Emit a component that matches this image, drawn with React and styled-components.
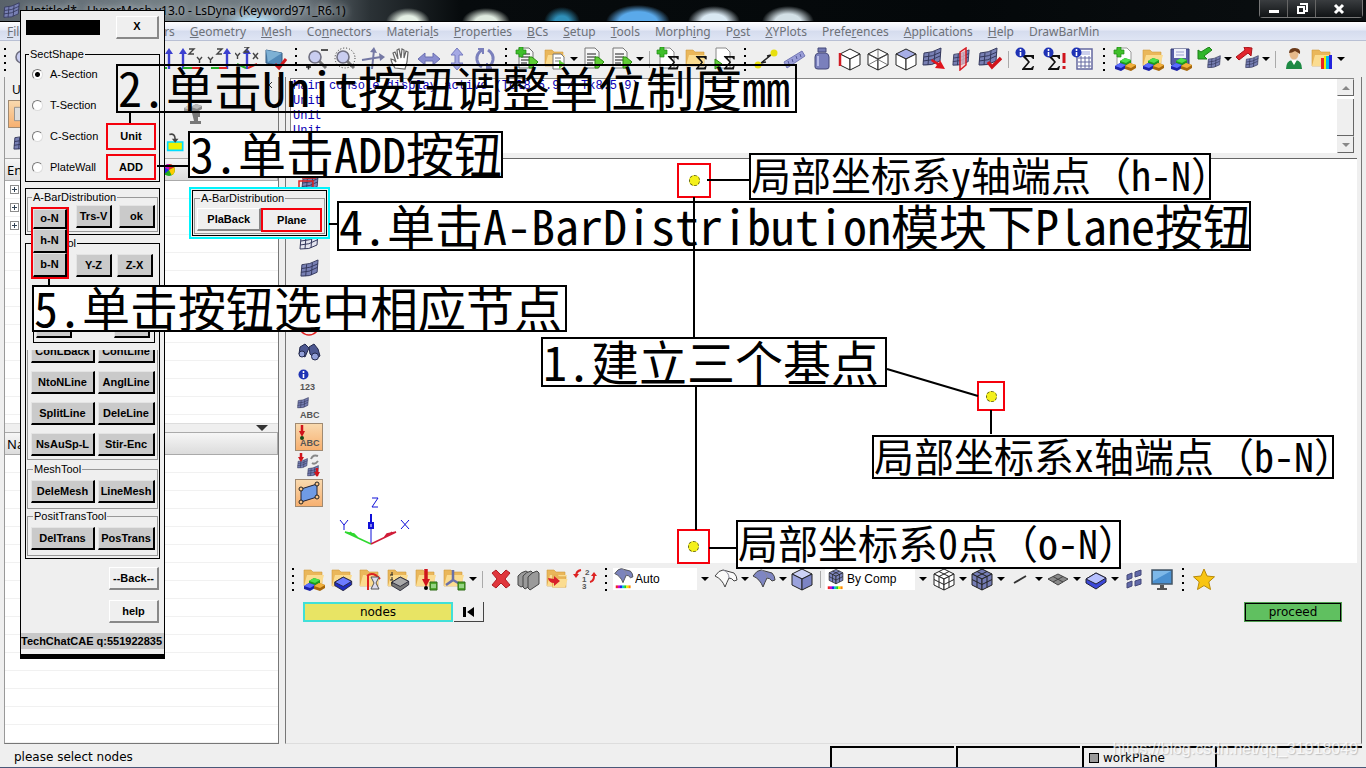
import React from "react";
import styled, { createGlobalStyle, css } from "styled-components";

const UI = `"Noto Sans", "Open Sans", sans-serif`;
const SANS = `"Liberation Sans", Arial, sans-serif`;
const PANEL = `"DejaVu Sans", Verdana, sans-serif`;
const FACE = "#efefef";

const Global = createGlobalStyle`
  *, *::before, *::after { box-sizing: border-box; }
  body { margin: 0; background: ${FACE}; font-family: ${SANS}; font-size: 12px; color: #000; }
  button, select, input { font: inherit; color: inherit; margin: 0; }
`;

/* ---------- window frame ---------- */
const Window = styled.div`
  position: relative;
  display: flex;
  flex-direction: column;
  min-height: 100vh;
  overflow: hidden;
  background: ${FACE};
`;
const TitleBar = styled.header`
  display: flex;
  justify-content: space-between;
  height: 22px;
  padding-left: 3px;
  border-bottom: 1px solid #000;
  background:
    radial-gradient(ellipse 22px 14px at 408px 22px, #e4efe4 45%, transparent),
    radial-gradient(ellipse 24px 14px at 486px 22px, #dfeadf 45%, transparent),
    radial-gradient(ellipse 18px 15px at 562px 22px, #2f8fb8 40%, transparent),
    radial-gradient(ellipse 32px 17px at 638px 22px, #5aa9ea 60%, transparent),
    radial-gradient(ellipse 26px 16px at 714px 22px, #d9e8f2 50%, transparent),
    radial-gradient(ellipse 26px 16px at 788px 22px, #d3e0e6 50%, transparent),
    radial-gradient(ellipse 34px 14px at 255px 22px, #b4dcf4 30%, transparent),
    linear-gradient(90deg, #59626a 0, #737d84 150px, #6d767d 300px, #2b3236 370px, #070b0d 460px, #04080a 70%, #0b0f11 100%);
`;
const TitleText = styled.h1`
  display: flex;
  align-items: center;
  gap: 5px;
  margin: 0;
  font: 400 12px/20px ${UI};
  color: #000;
  text-shadow: 0 0 6px #c9d0d4, 0 0 8px #aab3b8;
`;
const Controls = styled.div`
  display: flex;
  height: 18px;
  margin-right: 3px;
  border: 1px solid #777;
  border-top: 0;
  border-radius: 0 0 4px 4px;
`;
const ControlButton = styled.button`
  display: grid;
  place-items: center;
  width: ${(p) => (p.$wide ? 46 : 28)}px;
  padding: 0;
  border: 0;
  border-right: 1px solid #666;
  background: linear-gradient(#3a3d40, #101315);
  &:last-child { border-right: 0; }
`;
const MenuBar = styled.nav`
  display: flex;
  gap: 15px;
  height: 19px;
  padding-left: 7px;
  border-bottom: 1px solid #b9c0d4;
  background: linear-gradient(#fdfdff 0, #e6eaf6 45%, #d5dcee 50%, #dfe5f4 100%);
`;
const MenuLink = styled.a`
  font: 12px/19px ${UI};
  color: #6d7178;
  text-decoration: none;
  white-space: nowrap;
`;

/* ---------- toolbars ---------- */
const Toolbar = styled.div`
  display: flex;
  align-items: center;
  height: ${(p) => p.$h || 36}px;
`;
const Group = styled.div`
  display: flex;
  align-items: center;
  margin-left: ${(p) => p.$gap || 0}px;
`;
const Grip = styled.span`
  flex: none;
  width: ${(p) => p.$w || 14}px;
  height: 23px;
  background: repeating-linear-gradient(#000 0 2px, transparent 2px 7px) center / 2px 100% no-repeat;
`;
const ToolButton = styled.button`
  display: grid;
  place-items: center;
  flex: none;
  width: 28px;
  height: 28px;
  padding: 0;
  border: 0;
  background: none;
  ${(p) => p.$active && css`
    border: 1px solid #a08a72;
    background: linear-gradient(#f9d9ae, #f7b070);
  `}
`;
const Caret = styled.span`
  flex: none;
  width: 10px;
  display: grid;
  place-items: center;
  &::after {
    content: "";
    border: 4px solid transparent;
    border-top-color: #000;
    border-bottom: 0;
  }
`;
const Rule = styled.span`
  flex: none;
  width: 9px;
  height: 17px;
  background: linear-gradient(#aaa, #aaa) center / 1px 100% no-repeat;
`;
const Combo = styled.label`
  display: flex;
  align-items: center;
  flex: none;
  width: ${(p) => p.$w}px;
  height: 22px;
  background: #fff;
`;
const ComboSelect = styled.select`
  appearance: none;
  flex: 1;
  min-width: 0;
  height: 22px;
  padding: 0;
  border: 0;
  background: transparent;
  font-size: 12px;
`;
const ComboArrow = styled.span`
  display: grid;
  place-items: center;
  width: 15px;
  height: 22px;
  background: ${FACE};
`;

/* ---------- workspace ---------- */
const Workspace = styled.div`
  display: flex;
  flex: 1;
`;
const Browser = styled.aside`
  display: flex;
  flex-direction: column;
  flex: 0 0 275px;
  margin-left: 4px;
  border-left: 1px solid #999;
  border-right: 1px solid #777;
  border-bottom: 1px solid #777;
`;
const BrowserTools = styled.div`
  display: flex;
  flex-direction: column;
  height: 81px;
  padding: 3px 3px 0;
`;
const BrowserTab = styled.div`
  display: flex;
  justify-content: space-between;
  padding-left: 4px;
  font: 12px/20px ${UI};
`;
const CloseTab = styled.button`
  width: 12px;
  height: 10px;
  padding: 0;
  border: 0;
  background: none;
  line-height: 0;
`;
const BrowserRow = styled.div`
  display: flex;
  align-items: center;
  gap: 126px;
  height: 28px;
`;
const ListHead = styled.div`
  display: flex;
  align-items: center;
  justify-content: space-between;
  height: 23px;
  padding: 0 100px 0 2px;
  border: 1px solid #aaa;
  border-left: 0;
  background: linear-gradient(#f6f6f6, #dcdcdc);
  font: 13px/20px ${UI};
`;
const List = styled.div`
  flex: ${(p) => (p.$grow ? 1 : "none")};
  height: ${(p) => (p.$grow ? "auto" : "242px")};
  background: repeating-linear-gradient(#fff 0 17px, #f1f1f1 17px 18px);
`;
const Expander = styled.button`
  display: block;
  width: 9px;
  height: 9px;
  margin: 4px 0 9px 5px;
  padding: 0;
  border: 1px solid #8c8c8c;
  background:
    linear-gradient(#345, #345) center / 5px 1px no-repeat,
    linear-gradient(#345, #345) center / 1px 5px no-repeat, #fff;
`;
const Splitter = styled.div`
  display: flex;
  justify-content: flex-end;
  align-items: center;
  height: 9px;
  padding-right: 10px;
  border-top: 1px solid #ddd;
  &::after {
    content: "";
    border: 6px solid transparent;
    border-top-color: #333;
    border-bottom: 0;
  }
`;
const Main = styled.main`
  display: flex;
  flex-direction: column;
  flex: 1;
  min-width: 0;
  margin: 0 4px 0 6px;
  border-left: 1px solid #777;
  border-right: 1px solid #777;
  border-bottom: 1px solid #ddd;
`;
const Console = styled.div`
  display: flex;
  height: 80px;
  margin: 1px 7px 0 4px;
  padding-bottom: 5px;
  border-top: 1px solid #888;
`;
const ConsoleText = styled.pre`
  flex: 1;
  margin: 0;
  padding: 0 2px;
  overflow: hidden;
  background: #fff;
  border-left: 1px solid #888;
  color: #0a00b4;
  font: 12px/15px "Liberation Mono", monospace;
`;
const ScrollRail = styled.div`
  display: flex;
  flex-direction: column;
  width: 17px;
  background: #fff;
`;
const ScrollButton = styled.button`
  display: grid;
  place-items: center;
  height: 17px;
  padding: 0;
  border: 1px solid #eee;
  border-right-color: #666;
  border-bottom-color: #666;
  background: ${FACE};
`;
const ScrollThumb = styled.div`
  flex: 1;
  margin-top: 3px;
  border-right: 1px solid #666;
  border-bottom: 1px solid #666;
  background: ${FACE};
`;
const View = styled.div`
  display: flex;
  flex: 1;
  max-height: 405px;
  margin-right: 4px;
  border-top: 1px solid #666;
`;
const SideTools = styled.div`
  flex: none;
  width: 44px;
  padding: 12px 0 0 9px;
`;
const Canvas = styled.div`
  display: flex;
  align-items: flex-end;
  flex: 1;
  background: #fff;
  padding: 0 0 17px 6px;
`;
const CommandPanel = styled.section`
  display: flex;
  justify-content: space-between;
  height: 148px;
  padding: 7px 19px 0 17px;
  font: 12px/14px ${PANEL};
`;
const EntityKeys = styled.div`
  display: flex;
  align-items: flex-start;
  gap: 1px;
`;
const EntityButton = styled.button`
  width: 150px;
  height: 20px;
  padding: 0;
  border: 2px solid #40e0d8;
  background: #e8e464;
`;
const ResetButton = styled.button`
  display: grid;
  place-items: center;
  width: 30px;
  height: 20px;
  padding: 0;
  border: 0;
  border-right: 1px solid #444;
  border-bottom: 1px solid #444;
  background: ${FACE};
`;
const ProceedButton = styled.button`
  width: 98px;
  height: 20px;
  padding: 0;
  border: 2px solid #000;
  outline: 1px solid #4f9c4f;
  outline-offset: -1px;
  background: #60c060;
`;
const StatusBar = styled.footer`
  display: flex;
  align-items: stretch;
  height: 24px;
  padding-right: 2px;
  border-bottom: 1px solid #4a5878;
  font: 12px/22px ${PANEL};
`;
const StatusText = styled.p`
  flex: 1;
  margin: 0;
  padding: 2px 0 0 14px;
`;
const StatusCell = styled.div`
  display: flex;
  align-items: center;
  gap: 4px;
  width: ${(p) => p.$w}px;
  margin: 2px 2px 0 0;
  padding-left: 5px;
  border-top: 2px solid #000;
  border-left: 2px solid #000;
`;
const Swatch = styled.span`
  width: 10px;
  height: 10px;
  border: 1px solid #000;
  background: #999;
`;
const Watermark = styled.span`
  position: absolute;
  right: 8px;
  bottom: 9px;
  font: 16px/20px ${SANS};
  color: rgba(255, 255, 255, 0.8);
  text-shadow: 1px 1px 1px rgba(120, 120, 120, 0.4);
`;

/* ---------- floating macro window ---------- */
const MacroWindow = styled.section`
  position: absolute;
  left: 20px;
  top: 10px;
  width: 145px;
  padding: 0 4px;
  border: 1px solid #000;
  border-width: 1px 1px 5px 1px;
  background: ${FACE};
  font: 11px/13px ${SANS};
`;
const MacroHead = styled.div`
  display: flex;
  justify-content: space-between;
  align-items: center;
  height: 37px;
  padding: 0 1px 5px;
`;
const Masked = styled.span`
  width: 74px;
  height: 15px;
  background: #000;
`;
const Key = styled.button`
  width: ${(p) => p.$w || 56}px;
  height: ${(p) => p.$h || 23}px;
  padding: 0;
  overflow: hidden;
  border: 1px solid ${(p) => (p.$light ? "#fff" : "#e4e4e4")};
  border-right: 2px solid ${(p) => (p.$light ? "#888" : "#000")};
  border-bottom: 2px solid ${(p) => (p.$light ? "#888" : "#000")};
  background: ${(p) => (p.$light ? FACE : "#cacaca")};
  font: 700 11px/13px ${SANS};
  white-space: nowrap;
  ${(p) => p.$marked && css`border: 2px solid #f5000c;`}
`;
const Box = styled.fieldset`
  min-width: 0;
  margin: ${(p) => p.$top || 0}px 0 0;
  padding: ${(p) => p.$pad || "4px 2px 5px 3px"};
  border: 1px solid ${(p) => (p.$dark ? "#000" : "#999")};
`;
const Legend = styled.legend`
  margin-left: ${(p) => p.$indent || 2}px;
  padding: 0 1px;
  line-height: 13px;
`;
const SectionBody = styled.div`
  display: flex;
  justify-content: space-between;
`;
const Radios = styled.div`
  display: flex;
  flex-direction: column;
  gap: 18px;
  padding-bottom: 6px;
`;
const RadioLabel = styled.label`
  display: flex;
  align-items: center;
  gap: 7px;
  height: 13px;
  white-space: nowrap;
`;
const Radio = styled.input`
  appearance: none;
  width: 11px;
  height: 11px;
  border: 1px solid #777;
  border-right-color: #ddd;
  border-bottom-color: #ddd;
  border-radius: 50%;
  background: #fff;
  &:checked { background: radial-gradient(circle, #000 0 2px, #fff 3px); }
`;
const SideKeys = styled.div`
  display: flex;
  flex-direction: column;
  justify-content: flex-end;
  gap: 4px;
`;
const Frame = styled.div`
  margin-top: ${(p) => p.$top || 0}px;
  padding: ${(p) => (p.$tight ? 1 : 2)}px 1px;
  border: 1px solid #000;
`;
const KeyRow = styled.div`
  display: flex;
  justify-content: ${(p) => p.$justify || "space-between"};
  gap: ${(p) => p.$gap || 0}px;
  margin-bottom: ${(p) => p.$after || 0}px;
`;
const Tray = styled.div`
  display: flex;
  justify-content: space-between;
  margin: 35px 3px 7px 6px;
  padding: 3px 4px 4px 2px;
  border: 1px solid #000;
  border-top: 0;
`;
const CutRow = styled.div`
  display: flex;
  justify-content: space-between;
  align-items: flex-end;
  height: 13px;
  margin-bottom: 8px;
  overflow: hidden;
`;
const LineKeys = styled.div`
  margin: 0 0 3px;
  padding: 0 2px 3px 3px;
  border: 1px solid #999;
  border-top: 0;
`;
const Foot = styled.div`
  display: flex;
  flex-direction: column;
  align-items: flex-end;
  gap: 10px;
  padding: 8px 1px 10px 0;
`;
const Credit = styled.p`
  margin: 0 -4px 5px;
  background: #c8c8c8;
  font: 700 11px/16px ${SANS};
  white-space: nowrap;
`;

/* ---------- callouts pinned over the window ---------- */
const pin = css`
  position: absolute;
  left: ${(p) => p.$x}px;
  top: ${(p) => p.$y}px;
`;
const Note = styled.p`
  ${pin}
  width: ${(p) => p.$w}px;
  height: ${(p) => p.$h}px;
  margin: 0;
  border: 2px solid #000;
  background: ${(p) => (p.$clear ? "transparent" : "#fff")};
  font-family: "Noto Sans Mono CJK SC", "Noto Sans CJK SC", sans-serif;
  font-size: ${(p) => (p.$small ? 40 : 48)}px;
  line-height: ${(p) => p.$h - 8}px;
  white-space: nowrap;
`;
const Target = styled.span`
  ${pin}
  display: grid;
  place-items: center;
  width: ${(p) => p.$w}px;
  height: ${(p) => p.$h}px;
  border: 2px solid #f5000c;
  background: #fff;
  &::after {
    content: "";
    width: 11px;
    height: 11px;
    border: 1px dashed #6a6a10;
    border-radius: 50%;
    background: #f4f01c;
  }
`;
const NodeKeys = styled.div`
  ${pin}
  display: flex;
  flex-direction: column;
  width: 38px;
  border: 2px solid #f5000c;
  background: #cacaca;
`;
const PlaneBox = styled.div`
  ${pin}
  width: 141px;
  padding: 1px;
  border: 2px solid #00f4fc;
  background: ${FACE};
  font: 11px/13px ${SANS};
`;
const Connectors = styled.svg`
  position: absolute;
  left: 0;
  top: 0;
  pointer-events: none;
`;

/* ---------- icon pieces ---------- */
const Folder = () => (
  <g>
    <path d="M2 3h7l2 2h9v14H2z" fill="#eab75a" stroke="#d09a3c" strokeWidth=".6" />
    <path d="M2 19 5 8h17l-3 11z" fill="#fbdc90" />
  </g>
);
const Block = ({ x, y, c, d }) => (
  <g transform={`translate(${x} ${y})`}>
    <path d="M0 3 5 0l6 2v3L6 8 0 6z" fill={d} />
    <path d="M0 3 5 0l6 2-5 3z" fill={c} />
  </g>
);
const Comps = () => (
  <g>
    <Block x={7} y={11} c="#4be04b" d="#1e9a1e" />
    <Block x={2} y={16} c="#5b6cff" d="#1c22a8" />
    <Block x={12} y={16} c="#f2b13c" d="#a8680c" />
  </g>
);
const Mesh = ({ x = 0, y = 0, s = 1, c = "#7880b4" }) => (
  <g transform={`translate(${x} ${y}) scale(${s})`}>
    <path d="M2 6Q10 6 19 1l-1 13Q10 19 1 18z" fill={c} stroke="#34385c" />
    <path d="M7 5.500 6 18M13 4l-1 13M2 10q8 0 17-5M1 14q9 0 17-5" fill="none" stroke="#34385c" />
  </g>
);
const Doc = () => (
  <g>
    <path d="M4 1h10l4 4v16H4z" fill="#f7f7f7" stroke="#777" />
    <path d="M6 7h9M6 10h9M6 13h9M6 16h6" stroke="#666" strokeWidth="1.500" />
  </g>
);
const Plus = () => <path d="M4 0h4v3h3v4H8v3H4V7H1V3h3z" fill="#3fbf2a" stroke="#1d8a12" strokeWidth=".7" />;
const Sigma = ({ x = 6, y = 6, s = 1 }) => (
  <path transform={`translate(${x} ${y}) scale(${s})`} d="M1 1h12v4h-1l-2-2H5l4 5-5 6h6l2-2h1l-1 4H1v-1l6-7-6-6z" fill="#111" />
);
const Info = () => (
  <g>
    <circle cx="5.500" cy="5.500" r="5" fill="#1f33b5" />
    <path d="M5.500 2v2M5.500 5v4" stroke="#fff" strokeWidth="1.600" />
  </g>
);
const GreenOut = () => <path d="M14 10l3 0 6 5-6 6h-3z" fill="#5fce35" stroke="#2c8a12" />;
const Lens = () => (
  <g>
    <path d="M14 14l7 7" stroke="#777" strokeWidth="3" />
    <circle cx="10" cy="10" r="6" fill="#c9cdf0" stroke="#6f6f80" strokeWidth="1.600" />
  </g>
);
const Axis = ({ c, d }) => <path d={d} stroke={c} strokeWidth="2" fill="none" />;
const CubeWire = ({ top = "#fff", left = "#fff", right = "#fff" }) => (
  <g stroke="#222" strokeLinejoin="round">
    <path d="M12 2l10 5-10 5L2 7z" fill={top} />
    <path d="M2 7l10 5v11L2 18z" fill={left} />
    <path d="M22 7l-10 5v11l10-5z" fill={right} />
  </g>
);
const CubeGrid = ({ c, s = "#222" }) => (
  <g>
    <CubeWire top={c} left={c} right={c} />
    <path d="M7 4.500l10 5v11M17 4.500l-10 5v11M2 12.500l10 5 10-5" fill="none" stroke={s} />
  </g>
);
const Curve = ({ c }) => (
  <g stroke="#444" strokeLinejoin="round">
    <path d="M1 9Q5 3 9 3L20 6q3 3 3 7l-3 1q-2-3-5-3-2 4-4 9Q8 12 1 9z" fill={c} />
    <path d="M9 3q6 2 6 8" fill="none" stroke="#8a8a9a" />
  </g>
);
const Slab = ({ t, s }) => (
  <g stroke="#223">
    <path d="M2 12l10-6 10 5v4l-10 7-10-6z" fill={s} />
    <path d="M2 12l10-6 10 5-10 6z" fill={t} />
  </g>
);
const Rainbow = ({ y = 19 }) => (
  <g>
    {["#e22", "#c0c", "#22e", "#0cc", "#2c2", "#ee0", "#f80"].map((c, i) => (
      <rect key={c} x={3 + i * 2.3} y={y} width="2.400" height="3" fill={c} />
    ))}
  </g>
);
const ZUp = ({ x = 6 }) => (
  <g>
    <path d={`M${x} 22V5`} stroke="#3b40d0" strokeWidth="2.400" />
    <path d={`M${x - 4} 7l4-6 4 6z`} fill="#3b40d0" />
  </g>
);
const Z = ({ x, y }) => <path d={`M${x} ${y}h5l-5 5h5`} fill="none" stroke="#444" strokeWidth="1.400" />;
const Y = ({ x, y }) => <path d={`M${x} ${y}l2.500 3 2.500-3M${x + 2.5} ${y + 3}v3`} fill="none" stroke="#444" strokeWidth="1.400" />;
const X = ({ x, y }) => <path d={`M${x} ${y}l5 6M${x + 5} ${y}l-5 6`} fill="none" stroke="#444" strokeWidth="1.400" />;
const Abc = ({ t }) => (
  <text x="3" y="21" fontFamily="Liberation Sans, sans-serif" fontWeight="700" fontSize="9" fill="#555">{t}</text>
);

const ART = {
  lens: <Lens />,
  axA: <g><Z x={6} y={2} /><ZUp x={18} /><Axis c="#2a2" d="M2 21h14" /></g>,
  axB: <g><ZUp x={4} /><Z x={10} y={2} /><Y x={18} y={10} /><Axis c="#2a2" d="M4 21h10" /><Axis c="#d22" d="M13 21h8" /></g>,
  axC: <g><ZUp x={20} /><Z x={10} y={2} /><Y x={1} y={10} /><Axis c="#2a2" d="M4 21h8" /><Axis c="#d22" d="M12 21h8" /></g>,
  axD: <g><ZUp x={12} /><Y x={0} y={6} /><Z x={9} y={0} /><X x={18} y={6} /><Axis c="#2a2" d="M11 21l-9-4" /><Axis c="#d22" d="M13 21l9-4" /></g>,
  monCheck: <g><path d="M3 3l16 3v13L3 16z" fill="#5289b8" stroke="#335a80" /><path d="M3 3l16 3-14 9z" fill="#7db0d4" /><path d="M12 17l4 4 7-9" fill="none" stroke="#d0191e" strokeWidth="3" /></g>,
  zoomOut: <g><Lens /><path d="M16 3h7M1 20h5M3.500 17.500v5" stroke="#222" strokeWidth="1.500" /></g>,
  zoomDot: <g><circle cx="12" cy="11" r="10" fill="none" stroke="#222" strokeDasharray="1 2" /><Lens /></g>,
  cross: <g><path d="M1 13l19-3M13 3l-2 19" stroke="#7478a4" strokeWidth="2" /><path d="M18 6l6 4-5 4zM9 5l4-5 3 6z" fill="#7478a4" /></g>,
  hand: <path d="M6 21Q2 15 2 12l3 1 2 2-3-9 2-1 3 7-1-9 2-1 2 9 1-9 2 1 0 8 2-7 2 1-1 10-2 7z" fill="#fff" stroke="#666" strokeWidth="1.200" />,
  hArrow: <path d="M1 12l7-6v4h8V6l7 6-7 6v-4H8v4z" fill="#8a8ed0" stroke="#6a6eb0" />,
  vArrow: <path d="M12 1l6 7h-4v8h4l-6 7-6-7h4V8H6z" fill="#a5a9e4" stroke="#777bc0" />,
  rotate: <g fill="none" stroke="#7b80bc" strokeWidth="3"><path d="M9 3Q3 7 4 13q1 5 5 7M15 3q6 4 5 10-1 5-5 7" /><path d="M5 2h5v5M19 21h-5v-5" strokeWidth="2" /></g>,
  docPlus: <g><Doc /><Plus /><GreenOut /></g>,
  folderDoc: <g><Folder /><path d="M10 7h8l3 3v12H10z" fill="#fff" stroke="#777" /><path d="M12 11h6M12 14h6" stroke="#777" /><path d="M16 13l6 4-6 5z" fill="#5fce35" /></g>,
  docOut: <g><Doc /><GreenOut /></g>,
  sigPlus: <g><path d="M4 1h10l4 4v16H4z" fill="#fff" stroke="#888" /><Plus /><Sigma x={11} y={8} s={0.9} /></g>,
  sigFolder: <g><Folder /><Sigma x={11} y={8} s={0.9} /></g>,
  sigOut: <g><path d="M4 1h10l4 4v16H4z" fill="#fff" stroke="#888" /><path d="M3 12l7 5-7 5z" fill="#5fce35" stroke="#2c8a12" /><Sigma x={11} y={8} s={0.9} /></g>,
  measure: <g><path d="M7 16l10-8M7 16l5-1M17 8l-4 1" stroke="#222" strokeWidth="1.500" /><circle cx="4" cy="18" r="3.500" fill="#e8e010" /><circle cx="20" cy="6" r="3.500" fill="#e8e010" /></g>,
  ruler: <g><path d="M2 15L20 4l3 5L5 21z" fill="#9a9ed8" stroke="#7478b4" /><path d="M6 14l1 3M10 12l1 3M14 9l1 3M18 7l1 3" stroke="#555a98" /></g>,
  weight: <g><path d="M8 1h8v4H8z" fill="#767cb6" stroke="#444878" /><path d="M8 6q-3 1-3 4v10q0 2 3 2h8q3 0 3-2V10q0-3-3-4z" fill="#7a80bc" stroke="#444878" /><path d="M8 9v10" stroke="#b9bde8" strokeWidth="2" /></g>,
  wireRed: <g><CubeWire /><path d="M2 6v13" stroke="#d01c24" strokeWidth="2.500" /></g>,
  wire: <g><CubeWire /><path d="M12 2v11M2 18l20-11M22 18L2 7" stroke="#555" strokeWidth=".8" /></g>,
  wireTop: <CubeWire top="#a7aee6" />,
  meshArrow: <g><Mesh /><path d="M10 12l7 4 1-3 5 9-10-1 2-3-6-4z" fill="#e0141c" /></g>,
  meshCut: <g><Mesh x={2} y={2} s={0.9} /><path d="M10 5l6-4v17l-6 5z" fill="#f6c5c8" fillOpacity=".7" stroke="#d81c24" strokeWidth="1.500" /></g>,
  meshCheck: <g><Mesh /><path d="M10 15l4 5 9-9" fill="none" stroke="#d0141c" strokeWidth="3.500" /></g>,
  infoSig: <g><Sigma x={6} y={7} /><Info /></g>,
  infoSigBang: <g><Sigma x={4} y={7} /><Info /><path d="M21 6v10M21 19v3" stroke="#d0141c" strokeWidth="3" /></g>,
  infoCalc: <g><path d="M6 2h15v20H6z" fill="#fff" stroke="#6468a0" strokeWidth="1.500" /><path d="M8 4h11v4H8z" fill="#cdd0ec" /><path d="M7 11h13M7 15h13M7 19h13M10 9v12M14 9v12M18 9v12" stroke="#6468a0" /><Info /></g>,
  compNew: <g><path d="M4 1h10l4 4v16H4z" fill="#fff" stroke="#999" /><Plus /><Comps /></g>,
  compFolder: <g><Folder /><Comps /></g>,
  compSave: <g><path d="M2 2h18v17H4l-2-2z" fill="#555ca6" stroke="#333a70" /><path d="M5 2h12v9H5z" fill="#eef0fa" /><path d="M7 5h8M7 8h8" stroke="#9aa0d0" /><Comps /></g>,
  meshIn: <g><Mesh x={10} y={8} s={0.7} /><path d="M1 12V3l3 2 8-5 3 3-8 6 3 3z" fill="#30b52a" stroke="#1c8018" /></g>,
  meshOut: <g><Mesh x={10} y={8} s={0.7} /><path d="M9 0l8 1-1 8-3-3-9 7-3-3 9-7z" fill="#e2242c" stroke="#a8141a" /></g>,
  user: <g><path d="M4 22q0-8 6-9h4q6 1 6 9z" fill="#1d8a44" /><path d="M9 13l3 5 3-5z" fill="#fff" /><ellipse cx="12" cy="7" rx="4.500" ry="5.500" fill="#e7b98a" /><path d="M7 6q0-5 6-5t5 6q-3-2-5-3-3 2-6 2z" fill="#6b3a1a" /></g>,
  folderChart: <g><Folder /><path d="M11 11h3v11h-3z" fill="#e22" /><path d="M14 9h2v13h-2z" fill="#ee0" /><path d="M16 9h3v13h-3z" fill="#0be" /><path d="M19 8h3v14h-3z" fill="#22d" /></g>,
  mesh: <Mesh x={3} y={2} s={0.95} />,
  meshFrame: <g><Mesh x={4} y={1} s={0.9} /><path d="M2 8h14v12H2zM5 5h14" fill="none" stroke="#d22" strokeWidth="1.500" /></g>,
  meshLite: <Mesh x={2} y={2} c="#e3e4ef" />,
  noCircle: <g><Mesh x={4} y={3} s={0.8} /><circle cx="12" cy="12" r="10" fill="none" stroke="#e02020" strokeWidth="1.500" /></g>,
  binoc: <g fill="#4c5790" stroke="#22284c"><path d="M3 6l5-3 4 4-4 9-6-3z" /><path d="M12 6l5-3 4 5 2 7-5 3-5-5z" /><circle cx="5" cy="13" r="3" fill="#93a0d8" /><circle cx="18" cy="15.500" r="3.500" fill="#93a0d8" /></g>,
  info123: <g><g transform="translate(1 0)"><Info /></g><Abc t="123" /></g>,
  meshAbc: <g><Mesh x={0} y={0} s={0.6} /><Abc t="ABC" /></g>,
  loadAbc: <g><path d="M5 0v9" stroke="#d0141c" strokeWidth="2.500" /><path d="M2 6h6l-3 6z" fill="#d0141c" /><circle cx="5" cy="13" r="2" fill="#174a17" /><Abc t="ABC" /></g>,
  meshSwap: <g><Mesh x={0} y={5} s={0.55} /><Mesh x={10} y={12} s={0.6} /><path d="M4 0v7M20 15v8" stroke="#d0141c" strokeWidth="2.500" /><path d="M1 4h6L4 9zM17 19h6l-3 5z" fill="#d0141c" /><path d="M14 6q2-5 7-3M21 8q-3 4-6 2" fill="none" stroke="#888" strokeWidth="2" /></g>,
  quad: <g><path d="M4 8l16-5v13L4 21z" fill="#6f9be4" stroke="#223" /><g fill="#f7c48a" stroke="#222"><circle cx="4" cy="8" r="2" /><circle cx="20" cy="3" r="2" /><circle cx="20" cy="16" r="2" /><circle cx="4" cy="21" r="2" /></g></g>,
  slabFolder: <g><Folder /><g transform="translate(3 5) scale(.85)"><Slab t="#6c7cff" s="#1e2cc0" /></g></g>,
  timeFolder: <g><Folder /><path d="M9 9q6-5 13 3M10 9v14" fill="none" stroke="#d22" strokeWidth="2" /><path d="M13 10h8l-3 6 3 6h-8l3-6z" fill="#dde" stroke="#555" /></g>,
  propFolder: <g><Folder /><g transform="translate(4 5) scale(.85)"><Slab t="#aaa" s="#777" /></g><path d="M6 5v12M4 8h4M4 13h4" stroke="#222" strokeDasharray="3 2" /></g>,
  loadFolder: <g><Folder /><path d="M12 2v12" stroke="#d0141c" strokeWidth="3.500" /><path d="M8 12h8l-4 8z" fill="#d0141c" /><circle cx="12" cy="21" r="2" /><path d="M16 15h7v8h-7z" fill="#4fa82c" stroke="#2c6a14" /><path d="M17 18h5M17 20h5" stroke="#dfd" /></g>,
  sysFolder: <g><Folder /><path d="M11 3v10l-7 5M11 13l7 4" fill="none" stroke="#6a70a8" strokeWidth="2.500" /><path d="M16 15h7v8h-7z" fill="#4fa82c" stroke="#2c6a14" /><path d="M17 18h5M17 20h5" stroke="#dfd" /></g>,
  del: <path d="M3 6l4-3 5 5 5-5 4 3-5 6 5 6-4 3-5-5-5 5-4-3 5-6z" fill="#e0363c" stroke="#b01c22" strokeLinejoin="round" />,
  stack: <g fill="#9a9a9a" stroke="#444"><path d="M1 9q3-4 8-5l3 2v11l-8 3-3-2z" /><path d="M6 9q3-4 8-5l2 2v11l-8 5-2-2z" /><path d="M11 10q4-5 9-6l2 2v11l-9 6-2-2z" /></g>,
  moveFolder: <g><Folder /><g transform="translate(6 6) scale(.75)"><Folder /></g><path d="M3 11l6 1V9l6 5-6 5v-3q-5 0-6-5z" fill="#d8202a" /></g>,
  renum: <g><path d="M3 9q0-5 5-6M21 9q0 5-4 6" fill="none" stroke="#d22" strokeWidth="2" /><path d="M0 7h6l-3 4zM18 9h6l-3-4z" fill="#d22" /><g fontFamily="Liberation Sans, sans-serif" fontWeight="700" fontSize="8" fill="#555"><text x="12" y="8">2</text><text x="9" y="15">1</text><text x="9" y="22">3</text></g></g>,
  autoCombo: <g><g transform="translate(1 -2) scale(.9)"><Curve c="#7c84bc" /></g><Rainbow /></g>,
  curveLite: <Curve c="#fafafa" />,
  curve: <Curve c="#7f86c2" />,
  cube: <CubeWire top="#cdd2f6" left="#9aa2dc" right="#7c84c4" />,
  compCombo: <g><g transform="translate(3 0) scale(.75)"><CubeGrid c="#7c84bc" /></g><Rainbow y={20} /></g>,
  gridLite: <CubeGrid c="#fff" />,
  grid: <CubeGrid c="#747cb4" />,
  line: <path d="M6 16l12-7" stroke="#333" strokeWidth="1.800" />,
  plane: <g><path d="M2 12l10-5 10 5-10 6z" fill="#888" stroke="#444" /><path d="M7 9.500l10 5.500M17 9.500L7 15" stroke="#444" /></g>,
  slab: <Slab t="#b6c0ff" s="#3c48d8" />,
  quads: <g fill="#6068a8" stroke="#444878"><path d="M5 8l5-2v5l-5 2zM13 5l6-2v5l-6 2zM5 16l5-2v5l-5 2zM13 14l6-2v5l-6 2z" /></g>,
  screen: <g><path d="M2 3h20v14H2z" fill="#4a90d0" stroke="#456" strokeWidth="1.500" /><path d="M3 4h18L3 14z" fill="#7db8e8" /><path d="M10 18h4v3h3v2H7v-2h3z" fill="#555" /></g>,
  star: <path d="M12 2l3 7 7.500.8-5.700 5.100 1.700 7.600-6.500-3.900-6.500 3.900 1.700-7.600L1.500 9.800 9 9z" fill="#f9c512" stroke="#b98a08" />,
  blocksGrey: <g><Block x={2} y={3} c="#ccc" d="#999" /><Block x={9} y={2} c="#bbb" d="#888" /><path d="M10 11h8v4h-2v4h3v3H8v-3h4z" fill="#777" /></g>,
  arrowBox: <g><path d="M2 12h18v10H2z" fill="#eef000" stroke="#0df" strokeWidth="2" /><path d="M4 3q7-2 7 6" fill="none" stroke="#444" strokeWidth="2" /><path d="M7 8h8l-4 5z" fill="#444" /></g>,
  wheel: <g><circle cx="12" cy="12" r="9" fill="#2a2" /><path d="M12 12V3a9 9 0 0 1 8 5z" fill="#e22" /><path d="M12 12l8-4a9 9 0 0 1-4 12z" fill="#fc0" /><path d="M12 12L4 8a9 9 0 0 1 8-5z" fill="#c0c" /><path d="M12 12L4 8a9 9 0 0 0 1 10z" fill="#22e" /></g>,
  page: <path d="M3 4h18v16H3z" fill="#ddd" stroke="#888" />,
};
const Icon = ({ name, size = 24 }) => (
  <svg width={size} height={size} viewBox="0 0 24 24" aria-hidden="true">{ART[name]}</svg>
);

/* "|" is a rule, "v" a drop-down caret, ":" a grip */
const Tools = ({ items }) =>
  items.split(" ").map((n, i) => {
    if (n === "|") return <Rule key={i} />;
    if (n === "v") return <Caret key={i} />;
    if (n === ":") return <Grip key={i} />;
    return <ToolButton key={i} aria-label={n}><Icon name={n} /></ToolButton>;
  });

const MENUS = ["_File", "_Edit", "_View", "_Collectors", "_Geometry", "_Mesh", "Co_nnectors", "Materia_ls", "_Properties", "_BCs", "_Setup", "_Tools", "Morph_ing", "P_ost", "_XYPlots", "Prefe_rences", "_Applications", "_Help", "DrawBarMin"];
const MenuItem = ({ text }) => {
  const at = text.indexOf("_");
  if (at < 0) return <MenuLink href="#">{text}</MenuLink>;
  return <MenuLink href="#">{text.slice(0, at)}<u>{text[at + 1]}</u>{text.slice(at + 2)}</MenuLink>;
};

const SECTIONS = ["A-Section", "T-Section", "C-Section", "PlateWall"];
const SIDE = ["meshFrame", "mesh", "meshLite", "mesh", "mesh", "noCircle", "binoc", "info123", "meshAbc", "loadAbc", "meshSwap", "quad"];
const LINKS = [
  [130, 113, 130, 123], [157, 166, 188, 166], [329, 224, 337, 224], [49, 279, 49, 286],
  [694, 197, 694, 337], [696, 387, 696, 530], [707, 180, 749, 180], [887, 369, 978, 396],
  [991, 410, 991, 434], [709, 548, 736, 548],
];

const Macro = () => (
  <MacroWindow>
    <MacroHead><Masked /><Key $light $w={43}>X</Key></MacroHead>
    <Box $dark $pad="7px 3px 1px 6px">
      <Legend $indent={-3}>SectShape</Legend>
      <SectionBody>
        <Radios>
          {SECTIONS.map((s, i) => (
            <RadioLabel key={s}><Radio type="radio" name="section" defaultChecked={i === 0} />{s}</RadioLabel>
          ))}
        </Radios>
        <SideKeys>
          <Key $light $marked $w={50} $h={27}>Unit</Key>
          <Key $light $marked $w={50} $h={26}>ADD</Key>
        </SideKeys>
      </SectionBody>
    </Box>
    <Frame $top={6}>
      <Box $pad="1px 2px 3px">
        <Legend>A-BarDistribution</Legend>
        <KeyRow $justify="flex-end" $gap={7}><Key $w={36}>Trs-V</Key><Key $w={36}>ok</Key></KeyRow>
      </Box>
    </Frame>
    <Box $dark $top={2} $pad="4px 1px 2px">
      <Legend $indent={7}>LineTool</Legend>
      <KeyRow $justify="flex-end" $gap={5}><Key $w={36}>Y-Z</Key><Key $w={36}>Z-X</Key><span /></KeyRow>
      <Tray><Key $w={36} aria-label="Previous" /><Key $w={36} aria-label="Next" /></Tray>
      <LineKeys>
        <CutRow><Key $w={64}>ConLBack</Key><Key $w={57}>ContLine</Key></CutRow>
        <KeyRow $after={8}><Key $w={64}>NtoNLine</Key><Key $w={57}>AnglLine</Key></KeyRow>
        <KeyRow $after={8}><Key $w={64}>SplitLine</Key><Key $w={57}>DeleLine</Key></KeyRow>
        <KeyRow><Key $w={64}>NsAuSp-L</Key><Key $w={57}>Stir-Enc</Key></KeyRow>
      </LineKeys>
      <Box><Legend>MeshTool</Legend><KeyRow><Key $w={64}>DeleMesh</Key><Key $w={57}>LineMesh</Key></KeyRow></Box>
      <Box $top={1}><Legend>PositTransTool</Legend><KeyRow><Key $w={64}>DelTrans</Key><Key $w={57}>PosTrans</Key></KeyRow></Box>
    </Box>
    <Foot><Key $light $w={50}>--Back--</Key><Key $light $w={50}>help</Key></Foot>
    <Credit>TechChatCAE q:551922835</Credit>
  </MacroWindow>
);

export default function App() {
  return (
    <Window>
      <Global />
      <TitleBar>
        <TitleText><svg width="17" height="17" viewBox="0 0 20 20"><Mesh /></svg>Untitled* - HyperMesh v13.0 - LsDyna (Keyword971_R6.1)</TitleText>
        <Controls>
          <ControlButton aria-label="Minimize"><svg width="12" height="12"><path d="M1 7h10v3H1z" fill="#fff" /></svg></ControlButton>
          <ControlButton aria-label="Restore"><svg width="12" height="12"><path d="M4 1h7v7H9M2 4h6v6H2z" fill="none" stroke="#fff" strokeWidth="2" /></svg></ControlButton>
          <ControlButton aria-label="Close" $wide><svg width="12" height="12"><path d="M2 2l8 8M10 2l-8 8" stroke="#fff" strokeWidth="3" /></svg></ControlButton>
        </Controls>
      </TitleBar>
      <MenuBar>{MENUS.map((m) => <MenuItem key={m} text={m} />)}</MenuBar>
      <Toolbar>
        <Grip $w={10} />
        <Group><Tools items="lens" /></Group>
        <Group $gap={111}><Tools items="axA axB axC axD monCheck" /></Group>
        <Group><Tools items=": zoomOut zoomDot cross hand hArrow vArrow rotate : docPlus folderDoc v docOut docOut v | sigPlus sigFolder sigOut : measure ruler weight wireRed wire wireTop meshArrow meshCut meshCheck | infoSig infoSigBang infoCalc : compNew compFolder compSave meshIn v meshOut v | user folderChart v" /></Group>
      </Toolbar>
      <Workspace>
        <Browser>
          <BrowserTools>
            <BrowserTab>Utility
              <CloseTab aria-label="Close tab"><svg width="8" height="8"><path d="M1 1l6 6M7 1l-6 6" stroke="#333" /></svg></CloseTab>
            </BrowserTab>
            <BrowserRow>
              <ToolButton $active aria-label="page"><Icon name="page" size={20} /></ToolButton>
              <Group $gap={18}><ToolButton aria-label="blocks"><Icon name="blocksGrey" /></ToolButton></Group>
            </BrowserRow>
            <BrowserRow>
              <ToolButton aria-label="mesh"><Icon name="mesh" /></ToolButton>
              <ToolButton aria-label="send"><Icon name="arrowBox" size={20} /></ToolButton>
            </BrowserRow>
          </BrowserTools>
          <ListHead>Ent<Icon name="wheel" size={16} /></ListHead>
          <List><Expander aria-label="Expand" /><Expander aria-label="Expand" /><Expander aria-label="Expand" /></List>
          <Splitter />
          <ListHead>Name</ListHead>
          <List $grow />
        </Browser>
        <Main>
          <Console>
            <ConsoleText>{"Main console display active (Tcl8.5.9 / Tk8.5.9)\nUnit\nUnit\nUnit"}</ConsoleText>
            <ScrollRail>
              <ScrollButton aria-label="Scroll up"><svg width="8" height="4"><path d="M0 4l4-4 4 4z" fill="#888" /></svg></ScrollButton>
              <ScrollThumb />
              <ScrollButton aria-label="Scroll down"><svg width="8" height="4"><path d="M0 0l4 4 4-4z" fill="#888" /></svg></ScrollButton>
            </ScrollRail>
          </Console>
          <View>
            <SideTools>
              {SIDE.map((n, i) => (
                <ToolButton key={i} aria-label={n} $active={n === "loadAbc" || n === "quad"}><Icon name={n} /></ToolButton>
              ))}
            </SideTools>
            <Canvas>
              <svg width="80" height="52" viewBox="0 0 80 52" fill="none" aria-hidden="true">
                <path d="M35 50V20" stroke="#1010d8" /><path d="M35 20v8M33 29h4v5h-4z" stroke="#1010d8" strokeWidth="2" />
                <path d="M35 50L9 38l9 2 4 4M14 38l8 6" stroke="#2fd82f" strokeWidth="1.500" />
                <path d="M35 50l25-12-9 2-3 4M56 38l-8 6" stroke="#d01c38" strokeWidth="1.500" />
                <path d="M36 4h6l-6 9h6" stroke="#1010d8" /><path d="M4 26l4 5 4-5M8 31v5" stroke="#1010d8" /><path d="M65 26l8 9M73 26l-8 9" stroke="#1010d8" />
              </svg>
            </Canvas>
          </View>
          <Toolbar $h={32}>
            <Tools items=": compFolder slabFolder timeFolder propFolder loadFolder sysFolder v | del stack moveFolder renum :" />
            <Combo $w={99}><Icon name="autoCombo" size={22} /><ComboSelect aria-label="Display mode"><option>Auto</option></ComboSelect><ComboArrow><Caret /></ComboArrow></Combo>
            <Tools items="curveLite v curve v cube |" />
            <Combo $w={105}><Icon name="compCombo" size={22} /><ComboSelect aria-label="Colour mode"><option>By Comp</option></ComboSelect><ComboArrow><Caret /></ComboArrow></Combo>
            <Tools items="gridLite v grid v line v plane v slab v quads screen : star" />
          </Toolbar>
          <CommandPanel>
            <EntityKeys>
              <EntityButton>nodes</EntityButton>
              <ResetButton aria-label="Reset"><svg width="14" height="12"><path d="M1 1h3v10H1zM12 1v10L5 6z" fill="#000" /></svg></ResetButton>
            </EntityKeys>
            <ProceedButton>proceed</ProceedButton>
          </CommandPanel>
        </Main>
      </Workspace>
      <StatusBar>
        <StatusText>please select nodes</StatusText>
        <StatusCell $w={124} /><StatusCell $w={124} /><StatusCell $w={131}><Swatch />workPlane</StatusCell><StatusCell $w={147} />
      </StatusBar>
      <Watermark>https://blog.csdn.net/qq_31918049</Watermark>

      <Macro />
      <NodeKeys $x={31} $y={207}><Key $w={34} $h={20}>o-N</Key><Key $w={34} $h={24}>h-N</Key><Key $w={34} $h={24}>b-N</Key></NodeKeys>
      <PlaneBox $x={189} $y={187}>
        <Frame $tight>
          <Box $pad="3px 2px 1px">
            <Legend $indent={3}>A-BarDistribution</Legend>
            <KeyRow><Key $light $w={65}>PlaBack</Key><Key $light $marked $w={61} $h={24}>Plane</Key></KeyRow>
          </Box>
        </Frame>
      </PlaneBox>
      <Note $x={116} $y={64} $w={681} $h={49} $clear>2.单击Unit按钮调整单位制度mm</Note>
      <Note $x={188} $y={131} $w={315} $h={47}>3.单击ADD按钮</Note>
      <Note $x={337} $y={201} $w={914} $h={50}>4.单击A-BarDistribution模块下Plane按钮</Note>
      <Note $x={32} $y={285} $w={535} $h={47}>5.单击按钮选中相应节点</Note>
      <Note $x={541} $y={337} $w={346} $h={50}>1.建立三个基点</Note>
      <Note $x={749} $y={153} $w={462} $h={47} $small>局部坐标系y轴端点（h-N）</Note>
      <Note $x={872} $y={435} $w={462} $h={44} $small>局部坐标系x轴端点（b-N）</Note>
      <Note $x={736} $y={520} $w={385} $h={49} $small>局部坐标系0点（o-N）</Note>
      <Target $x={677} $y={163} $w={34} $h={35} />
      <Target $x={977} $y={381} $w={28} $h={30} />
      <Target $x={677} $y={529} $w={33} $h={35} />
      <Connectors width="1366" height="768" viewBox="0 0 1366 768" aria-hidden="true">
        {LINKS.map(([x1, y1, x2, y2]) => (
          <line key={`${x1}-${y1}`} x1={x1} y1={y1} x2={x2} y2={y2} stroke="#000" strokeWidth="2" />
        ))}
      </Connectors>
    </Window>
  );
}
